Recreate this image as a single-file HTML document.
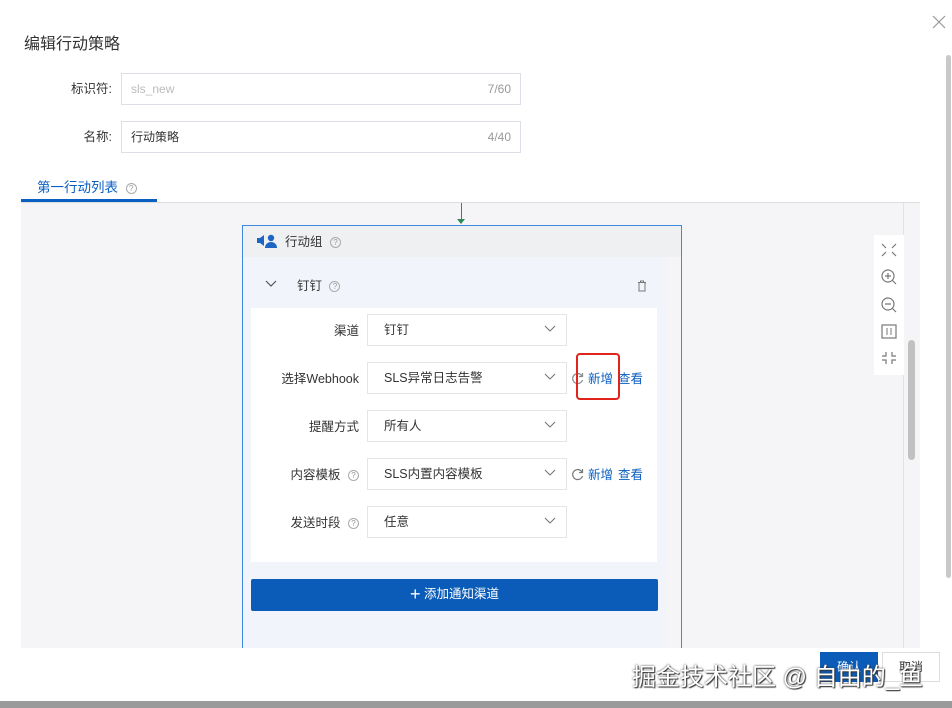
<!DOCTYPE html>
<html><head><meta charset="utf-8"><style>
*{margin:0;padding:0;box-sizing:border-box}
body{width:952px;height:708px;overflow:hidden;background:#9a9a9a;font-family:"Liberation Sans","Noto Sans CJK SC",sans-serif;font-size:12px;color:#333;position:relative}
.a{position:absolute}
.modal{left:0;top:0;width:952px;height:701px;background:#fff}
.inp{border:1px solid #dcdfe6;background:#fff;height:32px;line-height:30px;padding:0 9px;font-size:12px}
.sel{left:367px;width:200px;height:32px;border:1px solid #e3e5e8;background:#fff;line-height:30px;padding-left:16px;font-size:12.5px;color:#333}
.sel svg{position:absolute;right:10px;top:10px}
.lbl{width:120px;text-align:right;font-size:12.5px;color:#333}
.q{display:inline-block;width:11px;height:11px;border:1px solid #aaa;border-radius:50%;font-size:8px;line-height:9px;text-align:center;color:#999;vertical-align:middle;margin-left:4px}
.lnk{color:#0a5fc2;font-size:12.5px}
</style></head><body>
<div class="a modal"></div>
<div class="a" style="left:24px;top:30px;font-size:16px;color:#333">编辑行动策略</div>
<svg class="a" style="left:932px;top:15px" width="14" height="14"><path d="M1 1L13 13M13 1L1 13" stroke="#999" stroke-width="1.2"/></svg>
<div class="a" style="left:946px;top:55px;width:5px;height:523px;background:#c9c9c9;border-radius:3px"></div>

<div class="a lbl" style="left:-8px;top:78px">标识符:</div>
<div class="a inp" style="left:121px;top:73px;width:400px;color:#bbb">sls_new<span style="float:right;color:#999">7/60</span></div>
<div class="a lbl" style="left:-8px;top:126px">名称:</div>
<div class="a inp" style="left:121px;top:121px;width:400px;color:#333">行动策略<span style="float:right;color:#999">4/40</span></div>

<div class="a" style="left:37px;top:176px;font-size:13.5px;color:#0a5fc2">第一行动列表 <span class="q">?</span></div>
<div class="a" style="left:21px;top:199px;width:136px;height:3px;background:#0a5fc2"></div>

<div class="a" style="left:21px;top:202px;width:899px;height:446px;background:#f5f5f7;border-top:1px solid #ddd"></div>
<div class="a" style="left:903px;top:202px;width:1px;height:446px;background:#e2e2e2"></div>
<div class="a" style="left:908px;top:340px;width:7px;height:120px;background:#c1c1c1;border-radius:4px"></div>
<div class="a" style="left:461px;top:203px;width:1px;height:18px;background:#2c8a5a"></div>
<div class="a" style="left:457px;top:219px;width:0;height:0;border-left:4px solid transparent;border-right:4px solid transparent;border-top:5px solid #2c8a5a"></div>

<div class="a" style="left:874px;top:235px;width:30px;height:140px;background:#fff"></div>
<svg class="a" style="left:880px;top:242px" width="18" height="130" fill="none" stroke="#777" stroke-width="1.2">
<path d="M2 2l4 4M16 2l-4 4M2 14l4-4M16 14l-4-4"/>
<circle cx="8" cy="34" r="6"/><path d="M12.5 38.5L16 42M5 34h6M8 31v6"/>
<circle cx="8" cy="62" r="6"/><path d="M12.5 66.5L16 70M5 62h6"/>
<rect x="2" y="83" width="14" height="13"/><path d="M7 86v7M11 86v7" stroke-width="1"/>
<path d="M2 114h4v-4M16 114h-4v-4M2 118h4v4M16 118h-4v4"/>
</svg>

<div class="a" style="left:242px;top:225px;width:440px;height:423px;border:1px solid #3d8ae0;border-bottom:none;background:#f5f5f7"></div>
<div class="a" style="left:243px;top:226px;width:438px;height:31px;background:#eef0f2"></div>
<div class="a" style="left:243px;top:257px;width:423px;height:391px;background:#f1f5fb"></div>
<svg class="a" style="left:256px;top:234px" width="22" height="14"><rect x="1" y="4" width="3" height="5" fill="#1d66c4"/><path d="M4 4l4-3v11l-4-3z" fill="#1d66c4"/><circle cx="15" cy="4" r="3.2" fill="#1d66c4"/><path d="M9 14c0-4 3-6 6-6s6 2 6 6z" fill="#1d66c4"/></svg>
<div class="a" style="left:285px;top:231px;font-size:12.5px">行动组 <span class="q">?</span></div>

<svg class="a" style="left:265px;top:280px" width="12" height="8"><path d="M1 1l5 5 5-5" fill="none" stroke="#555" stroke-width="1.2"/></svg>
<div class="a" style="left:297px;top:275px;font-size:12.5px">钉钉 <span class="q">?</span></div>
<svg class="a" style="left:637px;top:280px" width="10" height="12" fill="none" stroke="#777"><path d="M1 2.5h8M3.5 2.5V1h3v1.5M2 2.5v8.5h6V2.5"/></svg>

<div class="a" style="left:251px;top:308px;width:406px;height:254px;background:#fff"></div>

<div class="a lbl" style="left:239px;top:320px">渠道</div>
<div class="a sel" style="top:314px">钉钉<svg width="12" height="8"><path d="M1 1l5 5 5-5" fill="none" stroke="#777" stroke-width="1.1"/></svg></div>
<div class="a lbl" style="left:239px;top:368px">选择Webhook</div>
<div class="a sel" style="top:362px">SLS异常日志告警<svg width="12" height="8"><path d="M1 1l5 5 5-5" fill="none" stroke="#777" stroke-width="1.1"/></svg></div>
<div class="a lbl" style="left:239px;top:416px">提醒方式</div>
<div class="a sel" style="top:410px">所有人<svg width="12" height="8"><path d="M1 1l5 5 5-5" fill="none" stroke="#777" stroke-width="1.1"/></svg></div>
<div class="a lbl" style="left:239px;top:464px">内容模板 <span class="q">?</span></div>
<div class="a sel" style="top:458px">SLS内置内容模板<svg width="12" height="8"><path d="M1 1l5 5 5-5" fill="none" stroke="#777" stroke-width="1.1"/></svg></div>
<div class="a lbl" style="left:239px;top:512px">发送时段 <span class="q">?</span></div>
<div class="a sel" style="top:506px">任意<svg width="12" height="8"><path d="M1 1l5 5 5-5" fill="none" stroke="#777" stroke-width="1.1"/></svg></div>

<svg class="a" style="left:571px;top:372px" width="13" height="13"><path d="M11 4A5 5 0 1 0 11.5 8" fill="none" stroke="#888" stroke-width="1.2"/><path d="M11.5 1v3.5H8" fill="none" stroke="#888" stroke-width="1.2"/></svg>
<div class="a lnk" style="left:588px;top:368px">新增</div><div class="a lnk" style="left:618px;top:368px">查看</div>
<div class="a" style="left:576px;top:353px;width:44px;height:47px;border:2px solid #e0241b;border-radius:4px"></div>
<svg class="a" style="left:571px;top:468px" width="13" height="13"><path d="M11 4A5 5 0 1 0 11.5 8" fill="none" stroke="#777" stroke-width="1.2"/><path d="M11.5 1v3.5H8" fill="none" stroke="#777" stroke-width="1.2"/></svg>
<div class="a lnk" style="left:588px;top:464px">新增</div><div class="a lnk" style="left:618px;top:464px">查看</div>

<div class="a" style="left:251px;top:579px;width:407px;height:32px;background:#0b5cb8;border-radius:2px;color:#fff;text-align:center;line-height:30px;font-size:12.5px"><span style="font-size:18px;vertical-align:-2px">+</span> 添加通知渠道</div>

<div class="a" style="left:820px;top:652px;width:58px;height:30px;background:#0b5cb8;color:#fff;text-align:center;line-height:30px;font-size:12px">确认</div>
<div class="a" style="left:882px;top:652px;width:58px;height:30px;border:1px solid #ddd;background:#fff;text-align:center;line-height:28px;font-size:12px">取消</div>
<div class="a" style="left:632px;top:657px;font-size:24px;color:#fff;text-shadow:0 0 2px #333,1px 1px 1px #333">掘金技术社区 @ 自由的_鱼</div>
</body></html>
